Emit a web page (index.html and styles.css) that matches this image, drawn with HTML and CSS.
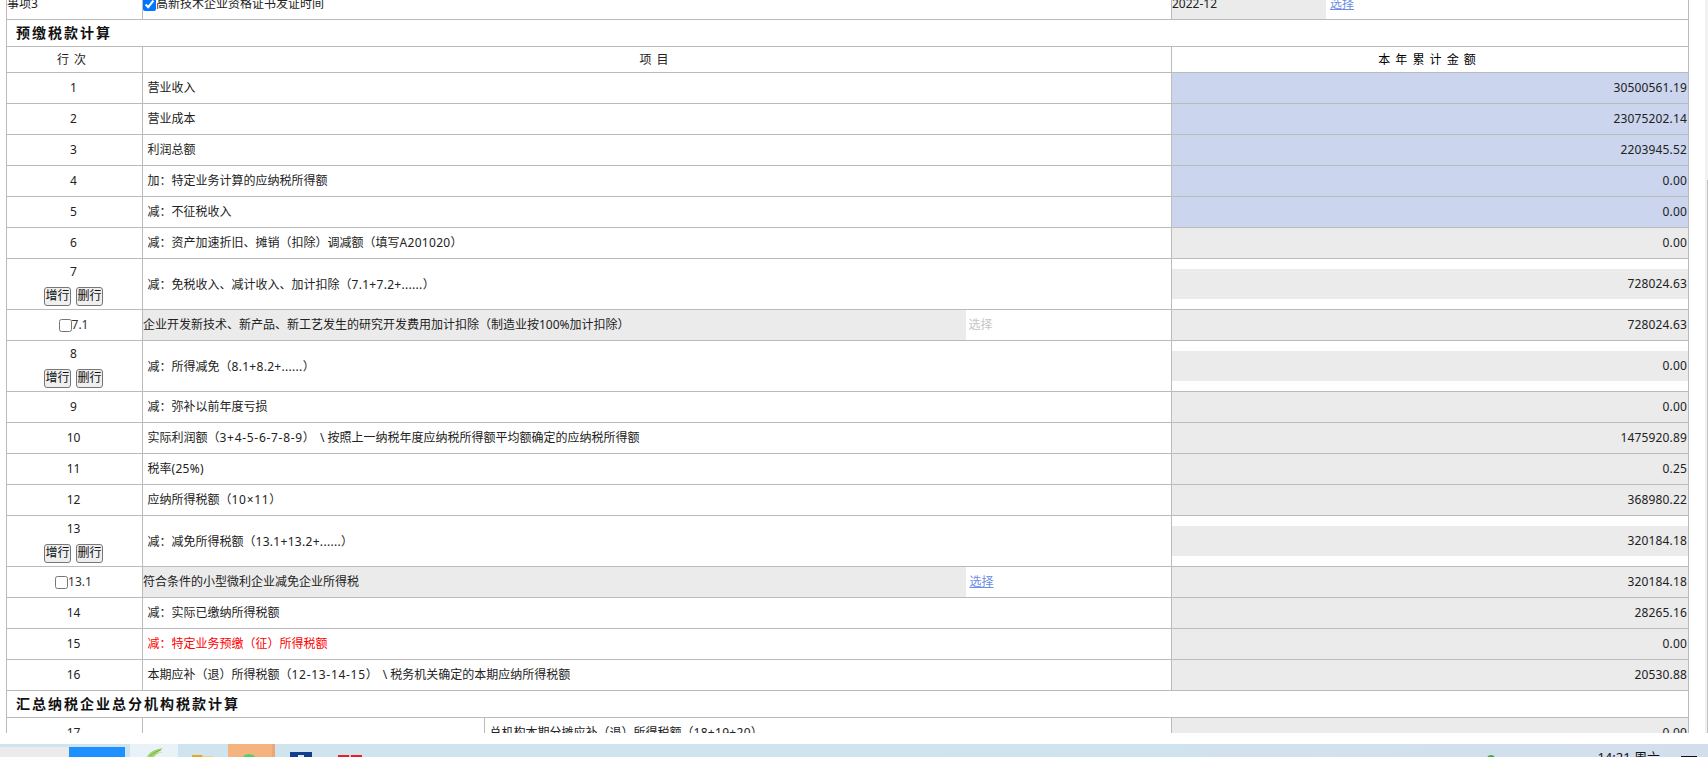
FILE: index.html
```html
<!DOCTYPE html>
<html lang="zh-CN">
<head>
<meta charset="utf-8">
<title>预缴税款计算</title>
<link rel="stylesheet" href="styles.css">
</head>
<body>
<div class="desktop">
  <main class="page">
    <div class="sheet">
      <table class="form">
        <colgroup>
          <col class="c-no"><col class="c-a"><col class="c-b"><col class="c-c"><col class="c-val">
        </colgroup>
        <tbody>
          <tr>
            <td class="plain">事项3</td>
            <td class="plain" colspan="3"><input type="checkbox" class="check" checked>高新技术企业资格证书发证时间</td>
            <td class="flush"><div class="date-row"><div class="date">2022-12</div><a class="link" href="#">选择</a></div></td>
          </tr>
          <tr class="sec"><td class="sec-title" colspan="5">预缴税款计算</td></tr>
          <tr class="head">
            <td class="center">行 次</td>
            <td class="center" colspan="3">项 目</td>
            <td class="center total">本 年 累 计 金 额</td>
          </tr>
          <tr><td class="no">1</td><td class="item" colspan="3">营业收入</td><td class="num blue">30500561.19</td></tr>
          <tr><td class="no">2</td><td class="item" colspan="3">营业成本</td><td class="num blue">23075202.14</td></tr>
          <tr><td class="no">3</td><td class="item" colspan="3">利润总额</td><td class="num blue">2203945.52</td></tr>
          <tr><td class="no">4</td><td class="item" colspan="3">加：特定业务计算的应纳税所得额</td><td class="num blue">0.00</td></tr>
          <tr><td class="no">5</td><td class="item" colspan="3">减：不征税收入</td><td class="num blue">0.00</td></tr>
          <tr><td class="no">6</td><td class="item" colspan="3">减：资产加速折旧、摊销（扣除）调减额（填写<span class="lat">A201020</span>）</td><td class="num gray">0.00</td></tr>
          <tr class="tall">
            <td class="no"><div class="no-label">7</div><div class="btns"><button class="btn">增行</button><button class="btn">删行</button></div></td>
            <td class="item" colspan="3">减：免税收入、减计收入、加计扣除（<span class="lat">7.1+7.2+......</span>）</td>
            <td class="flush"><div class="num inset">728024.63</div></td>
          </tr>
          <tr>
            <td class="no sub"><input type="checkbox" class="check">7.1</td>
            <td class="sub-item gray" colspan="2">企业开发新技术、新产品、新工艺发生的研究开发费用加计扣除（制造业按100%加计扣除）</td>
            <td class="pick"><span class="muted">选择</span></td>
            <td class="num gray">728024.63</td>
          </tr>
          <tr class="tall">
            <td class="no"><div class="no-label">8</div><div class="btns"><button class="btn">增行</button><button class="btn">删行</button></div></td>
            <td class="item" colspan="3">减：所得减免（<span class="lat">8.1+8.2+......</span>）</td>
            <td class="flush"><div class="num inset">0.00</div></td>
          </tr>
          <tr><td class="no">9</td><td class="item" colspan="3">减：弥补以前年度亏损</td><td class="num gray">0.00</td></tr>
          <tr><td class="no">10</td><td class="item" colspan="3">实际利润额（<span class="lat-wide">3+4-5-6-7-8-9</span>）<span class="slash">\</span> 按照上一纳税年度应纳税所得额平均额确定的应纳税所得额</td><td class="num gray">1475920.89</td></tr>
          <tr><td class="no">11</td><td class="item" colspan="3">税率<span class="lat">(25%)</span></td><td class="num gray">0.25</td></tr>
          <tr><td class="no">12</td><td class="item" colspan="3">应纳所得税额（<span class="lat-wide">10×11</span>）</td><td class="num gray">368980.22</td></tr>
          <tr class="tall">
            <td class="no"><div class="no-label">13</div><div class="btns"><button class="btn">增行</button><button class="btn">删行</button></div></td>
            <td class="item" colspan="3">减：减免所得税额（<span class="lat">13.1+13.2+......</span>）</td>
            <td class="flush"><div class="num inset">320184.18</div></td>
          </tr>
          <tr>
            <td class="no sub"><input type="checkbox" class="check">13.1</td>
            <td class="sub-item gray" colspan="2">符合条件的小型微利企业减免企业所得税</td>
            <td class="pick"><a class="link" href="#">选择</a></td>
            <td class="num gray">320184.18</td>
          </tr>
          <tr><td class="no">14</td><td class="item" colspan="3">减：实际已缴纳所得税额</td><td class="num gray">28265.16</td></tr>
          <tr><td class="no">15</td><td class="item red" colspan="3">减：特定业务预缴（征）所得税额</td><td class="num gray">0.00</td></tr>
          <tr><td class="no">16</td><td class="item" colspan="3">本期应补（退）所得税额（<span class="lat-wide">12-13-14-15</span>）<span class="slash">\</span> 税务机关确定的本期应纳所得税额</td><td class="num gray">20530.88</td></tr>
          <tr class="sec"><td class="sec-title" colspan="5">汇总纳税企业总分机构税款计算</td></tr>
          <tr><td class="no">17</td><td></td><td class="item" colspan="2">总机构本期分摊应补（退）所得税额（<span class="lat">18+19+20</span>）</td><td class="num gray">0.00</td></tr>
        </tbody>
      </table>
    </div>
    <div class="scrollbar"><div class="thumb"></div></div>
  </main>
  <div class="gap"></div>
  <footer class="taskbar">
    <div class="task task-gray"></div>
    <div class="task task-blue"></div>
    <div class="task task-light">
      <svg class="ico" width="48" height="13" viewBox="0 0 48 13"><path d="M17 13c2-5 8-8 16-9-2 2-4 3-5 5 2-1 3-1 5-1-4 1-7 2-9 5z" fill="#a9d472"/><path d="M20 12c3-3 7-5 11-6" stroke="#6fae45" fill="none"/></svg>
    </div>
    <div class="task task-plain">
      <svg class="ico" width="50" height="13" viewBox="0 0 50 13"><path d="M14 11h10l2 2h-12z" fill="#e5a823"/><path d="M24 12h11v1h-11z" fill="#f1d27c"/></svg>
    </div>
    <div class="task task-orange">
      <svg class="ico" width="44" height="13" viewBox="0 0 44 13"><circle cx="21" cy="19" r="9" fill="#4fd06a"/></svg>
    </div>
    <div class="task task-apps">
      <svg class="ico" width="100" height="13" viewBox="0 0 100 13"><rect x="15" y="8" width="22" height="5" fill="#123f8c"/><rect x="23" y="11" width="6" height="2" fill="#dfe7f2"/><rect x="63" y="11" width="24" height="2" fill="#ee1c25"/><rect x="74" y="11" width="2" height="2" fill="#f7a9a9"/></svg>
    </div>
    <div class="tray">
      <span class="tray-dot"></span>
      <span class="clock">14:21 周六</span>
      <span class="tray-line"></span>
    </div>
  </footer>
</div>
</body>
</html>
```

FILE: styles.css
```css
html, body {
  margin: 0;
  padding: 0;
  height: 100%;
  background: #fff;
  overflow: hidden;
}

.desktop {
  display: flex;
  flex-direction: column;
  height: 757px;
  font-family: "Noto Sans", "Noto Sans CJK SC", sans-serif;
  font-size: 12px;
  color: #222;
}

.page {
  display: flex;
  height: 733px;
  overflow: hidden;
  flex: none;
}

.sheet {
  width: 1705px;
  padding-left: 6px;
  box-sizing: border-box;
  overflow: hidden;
}

.form {
  width: 1682px;
  margin-top: -12px;
  border-collapse: collapse;
  table-layout: fixed;
}

.c-no { width: 136px; }
.c-a { width: 342px; }
.c-b { width: 481px; }
.c-c { width: 206px; }
.c-val { width: 517px; }

.form tr { height: 31px; }
.form tr.tall { height: 51px; }
.form tr.sec { height: 27px; }
.form tr.head { height: 26px; }

.form td {
  border: 1px solid #bbb;
  padding: 0;
  line-height: 16px;
  white-space: nowrap;
  overflow: hidden;
}

.form .tall .no,
.form .tall .item {
  padding-top: 1px;
}

.check {
  width: 13px;
  height: 13px;
  margin: 0;
  vertical-align: middle;
}

.flush { vertical-align: middle; }

.date-row {
  display: flex;
  align-items: center;
  height: 30px;
}

.date {
  width: 154px;
  height: 30px;
  line-height: 30px;
  background: #ebebeb;
  flex: none;
}

.link {
  margin-left: 4px;
  color: #6d8ee6;
  text-decoration: underline;
}

.muted {
  margin-left: 3px;
  color: #c6c6c6;
}

.form .sec-title {
  padding-left: 9px;
  font-size: 14px;
  font-weight: 700;
  letter-spacing: 2px;
  color: #111;
}

.form .center {
  padding-right: 5px;
  text-align: center;
  letter-spacing: 1px;
}

.total { color: #000; }

.form .no {
  padding-right: 2px;
  text-align: center;
}

.no-label {
  height: 16px;
  margin-bottom: 7px;
}

.sub { color: #333; }

.btns {
  display: flex;
  justify-content: center;
  gap: 5px;
}

.btn {
  width: 27px;
  height: 19px;
  padding: 0;
  border: 1px solid #767676;
  border-radius: 3px;
  background: #efefef;
  color: #111;
  font: inherit;
  line-height: 16px;
}

.form .item { padding-left: 4.5px; }
.red { color: #f00; }

.lat { letter-spacing: 0.3px; }
.lat-wide { letter-spacing: 0.7px; }
.slash { margin-left: 5px; }

.form .pick { border-left: none; }
.form .sub-item { border-right: none; }

.form .num {
  text-align: right;
  padding-right: 1px;
  letter-spacing: 0.15px;
}

.blue { background: #cbd5ee; }
.gray { background: #ebebeb; }

.inset {
  height: 30px;
  line-height: 30px;
  background: #ebebeb;
}

.scrollbar {
  width: 3px;
  background: #f1f1f1;
  display: flex;
  justify-content: flex-end;
}

.thumb {
  width: 1px;
  height: 553px;
  margin-top: 180px;
  background: #c1c1c1;
}

.gap {
  height: 11px;
  flex: none;
}

.taskbar {
  display: flex;
  height: 13px;
  flex: none;
  overflow: hidden;
  background: linear-gradient(90deg, #cfe4ee 0%, #cfe4ee 55%, #d3deec 100%);
}

.task {
  flex: none;
  height: 13px;
}

.ico { display: block; }

.task-gray {
  width: 69px;
  height: 10px;
  margin-top: 3px;
  background: #ebebeb;
}

.task-blue {
  width: 56px;
  height: 10px;
  margin-top: 3px;
  background: #1e90ff;
}

.task-light {
  width: 48px;
  margin-left: 5px;
  background: #e9f3f7;
}

.task-plain { width: 50px; }

.task-orange {
  width: 47px;
  background: #f4b37f;
  border-right: 3px solid #e9a878;
  box-sizing: border-box;
}

.task-apps { width: 100px; }

.tray {
  flex: 1;
  display: flex;
  align-items: flex-start;
  justify-content: flex-end;
}

.tray-dot {
  width: 8px;
  height: 8px;
  margin-top: 11px;
  margin-right: 102px;
  border-radius: 50%;
  background: #3fae3f;
}

.clock {
  margin-top: 4px;
  margin-right: 21px;
  font-size: 13px;
  line-height: 18px;
  color: #111;
}

.tray-line {
  width: 16px;
  height: 1px;
  margin-top: 12px;
  margin-right: 11px;
  background: #111;
}
```
